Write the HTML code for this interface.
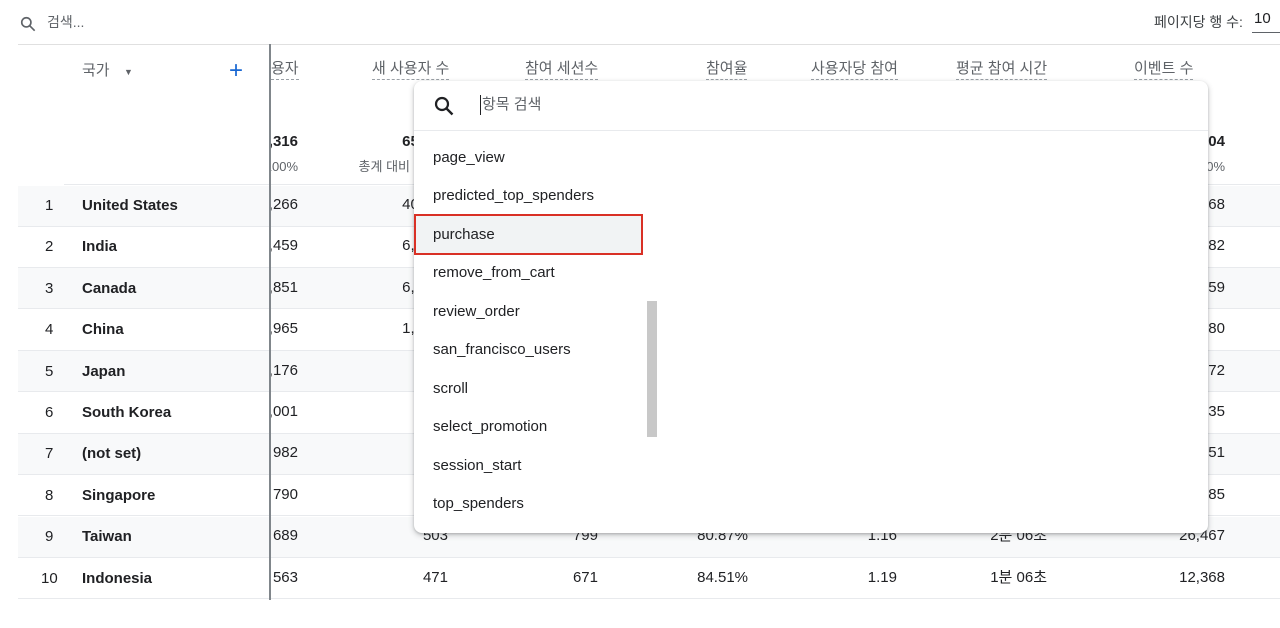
<!DOCTYPE html>
<html><head><meta charset="utf-8"><style>
*{margin:0;padding:0;box-sizing:border-box}
body{width:1280px;height:628px;background:#fff;position:relative;overflow:hidden;font-family:"Liberation Sans","Noto Sans CJK KR",sans-serif;color:#202124;font-size:15px;line-height:18px}
.a{position:absolute;white-space:nowrap;line-height:18px}
.r{text-align:right}
.row{position:absolute;left:18px;width:1262px;height:41px;border-bottom:1px solid #e8eaed}
.sh{background:#f8f9fa}
.hd{color:#5f6368;font-size:15px;border-bottom:1px dashed #9aa0a6;padding-bottom:1px;display:inline-block;line-height:18px}
.clip{position:absolute;left:271px;top:44px;width:1009px;height:560px;overflow:hidden}
.clip .a{transform:translateX(-271px)}
.it{position:absolute;left:433px;font-size:15px;color:#202124;line-height:18px}
</style></head><body>
<svg class="a" style="left:18px;top:14px" width="20" height="20" viewBox="0 0 24 24"><circle cx="10" cy="10" r="5.5" fill="none" stroke="#5f6368" stroke-width="2"/><path d="M14 14l6 6" stroke="#5f6368" stroke-width="2"/></svg>
<div class="a" style="left:47px;top:13px;color:#5f6368;font-size:14px">검색...</div>
<div class="a" style="left:1154px;top:13px;color:#3c4043;font-size:14px">페이지당 행 수:</div>
<div class="a" style="left:1254px;top:10px;font-size:15px">10</div>
<div class="a" style="left:1252px;top:32px;width:28px;height:1px;background:#5f6368"></div>
<div class="a" style="left:18px;top:44px;width:1262px;height:1px;background:#e0e0e0"></div>

<div class="row sh" style="top:186px"></div>
<div class="row" style="top:227px"></div>
<div class="row sh" style="top:268px"></div>
<div class="row" style="top:310px"></div>
<div class="row sh" style="top:351px"></div>
<div class="row" style="top:393px"></div>
<div class="row sh" style="top:434px"></div>
<div class="row" style="top:475px"></div>
<div class="row sh" style="top:517px"></div>
<div class="row" style="top:558px"></div>
<div class="a" style="left:64px;top:184px;width:1216px;height:1px;background:#e8eaed"></div>

<div class="a" style="left:82px;top:62px;color:#5f6368">국가</div>
<div class="a" style="left:124px;top:63px;color:#5f6368;font-size:9px">▼</div>
<div class="a" style="left:229px;top:58px;font-size:24px;line-height:26px;color:#1967d2">+</div>

<div class="a" style="left:269px;top:44px;width:2px;height:556px;background:#80868b"></div>

<div class="clip">
<div class="a" style="left:271px;top:16px"><span class="hd">용자</span></div>
<div class="a" style="left:372px;top:16px"><span class="hd">새 사용자 수</span></div>
<div class="a" style="left:525px;top:16px"><span class="hd">참여 세션수</span></div>
<div class="a" style="left:706px;top:16px"><span class="hd">참여율</span></div>
<div class="a" style="left:811px;top:16px"><span class="hd">사용자당 참여</span></div>
<div class="a" style="left:956px;top:16px"><span class="hd">평균 참여 시간</span></div>
<div class="a" style="left:1134px;top:16px"><span class="hd">이벤트 수</span></div>
<div class="a r" style="left:200px;width:98px;top:89px;font-weight:bold">5,316</div>
<div class="a r" style="left:200px;width:98px;top:114px;color:#5f6368;font-size:13px">100%</div>
<div class="a r" style="left:300px;width:148px;top:89px;font-weight:bold">65,556</div>
<div class="a r" style="left:300px;width:110px;top:114px;color:#5f6368;font-size:13px">총계 대비</div>
<div class="a r" style="left:1100px;width:125px;top:89px;font-weight:bold">304</div>
<div class="a r" style="left:1100px;width:125px;top:114px;color:#5f6368;font-size:13px">100%</div>
<div class="a r" style="left:200px;width:98px;top:152px">2,266</div><div class="a r" style="left:300px;width:148px;top:152px">40,221</div><div class="a r" style="left:1100px;width:125px;top:152px">10,268</div>
<div class="a r" style="left:200px;width:98px;top:193px">1,459</div><div class="a r" style="left:300px;width:148px;top:193px">6,1229</div><div class="a r" style="left:1100px;width:125px;top:193px">9,182</div>
<div class="a r" style="left:200px;width:98px;top:235px">1,851</div><div class="a r" style="left:300px;width:148px;top:235px">6,3429</div><div class="a r" style="left:1100px;width:125px;top:235px">8,759</div>
<div class="a r" style="left:200px;width:98px;top:276px">1,965</div><div class="a r" style="left:300px;width:148px;top:276px">1,5029</div><div class="a r" style="left:1100px;width:125px;top:276px">7,580</div>
<div class="a r" style="left:200px;width:98px;top:318px">1,176</div><div class="a r" style="left:1100px;width:125px;top:318px">6,172</div>
<div class="a r" style="left:200px;width:98px;top:359px">1,001</div><div class="a r" style="left:1100px;width:125px;top:359px">5,935</div>
<div class="a r" style="left:200px;width:98px;top:400px">982</div><div class="a r" style="left:1100px;width:125px;top:400px">5,651</div>
<div class="a r" style="left:200px;width:98px;top:442px">790</div><div class="a r" style="left:1100px;width:125px;top:442px">4,885</div>
<div class="a r" style="left:200px;width:98px;top:483px">689</div><div class="a r" style="left:300px;width:148px;top:483px">503</div><div class="a r" style="left:450px;width:148px;top:483px">799</div><div class="a r" style="left:600px;width:148px;top:483px">80.87%</div><div class="a r" style="left:750px;width:147px;top:483px">1.16</div><div class="a r" style="left:900px;width:147px;top:483px">2분 06초</div><div class="a r" style="left:1100px;width:125px;top:483px">26,467</div>
<div class="a r" style="left:200px;width:98px;top:525px">563</div><div class="a r" style="left:300px;width:148px;top:525px">471</div><div class="a r" style="left:450px;width:148px;top:525px">671</div><div class="a r" style="left:600px;width:148px;top:525px">84.51%</div><div class="a r" style="left:750px;width:147px;top:525px">1.19</div><div class="a r" style="left:900px;width:147px;top:525px">1분 06초</div><div class="a r" style="left:1100px;width:125px;top:525px">12,368</div>
</div>

<div class="a" style="left:45px;top:197px">1</div><div class="a" style="left:82px;top:197px;font-weight:bold">United States</div>
<div class="a" style="left:45px;top:238px">2</div><div class="a" style="left:82px;top:238px;font-weight:bold">India</div>
<div class="a" style="left:45px;top:280px">3</div><div class="a" style="left:82px;top:280px;font-weight:bold">Canada</div>
<div class="a" style="left:45px;top:321px">4</div><div class="a" style="left:82px;top:321px;font-weight:bold">China</div>
<div class="a" style="left:45px;top:363px">5</div><div class="a" style="left:82px;top:363px;font-weight:bold">Japan</div>
<div class="a" style="left:45px;top:404px">6</div><div class="a" style="left:82px;top:404px;font-weight:bold">South Korea</div>
<div class="a" style="left:45px;top:445px">7</div><div class="a" style="left:82px;top:445px;font-weight:bold">(not set)</div>
<div class="a" style="left:45px;top:487px">8</div><div class="a" style="left:82px;top:487px;font-weight:bold">Singapore</div>
<div class="a" style="left:45px;top:528px">9</div><div class="a" style="left:82px;top:528px;font-weight:bold">Taiwan</div>
<div class="a" style="left:41px;top:570px">10</div><div class="a" style="left:82px;top:570px;font-weight:bold">Indonesia</div>

<div class="a" style="left:414px;top:81px;width:794px;height:452px;background:#fff;border-radius:8px;box-shadow:0 2px 6px rgba(60,64,67,.3),0 1px 2px rgba(60,64,67,.2)">
<div class="a" style="left:0;top:49px;width:794px;height:1px;background:#e8eaed"></div>
</div>
<svg class="a" style="left:432px;top:94px" width="24" height="24" viewBox="0 0 24 24"><circle cx="10" cy="10" r="6" fill="none" stroke="#202124" stroke-width="2.2"/><path d="M14.5 14.5l6 6" stroke="#202124" stroke-width="2.4"/></svg>
<div class="a" style="left:480px;top:95px;width:1px;height:20px;background:#202124"></div>
<div class="a" style="left:482px;top:96px;color:#5f6368;font-size:15px">항목 검색</div>
<div class="a" style="left:414px;top:214px;width:229px;height:41px;background:#f1f3f4;border:2px solid #d93025"></div>
<div class="a" style="left:647px;top:301px;width:10px;height:136px;background:#c8c8c8"></div>
<div class="it" style="top:149px">page_view</div>
<div class="it" style="top:187px">predicted_top_spenders</div>
<div class="it" style="top:226px">purchase</div>
<div class="it" style="top:264px">remove_from_cart</div>
<div class="it" style="top:303px">review_order</div>
<div class="it" style="top:341px">san_francisco_users</div>
<div class="it" style="top:380px">scroll</div>
<div class="it" style="top:418px">select_promotion</div>
<div class="it" style="top:457px">session_start</div>
<div class="it" style="top:495px">top_spenders</div>
</body></html>
